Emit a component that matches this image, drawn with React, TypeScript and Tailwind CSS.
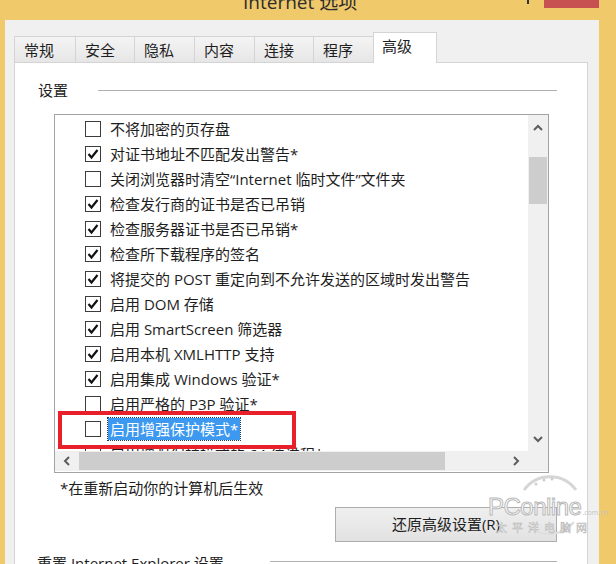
const rows: { label: string; checked: boolean; selected?: boolean }[] = [
  { label: "不将加密的页存盘", checked: false },
  { label: "对证书地址不匹配发出警告*", checked: true },
  { label: "关闭浏览器时清空“Internet 临时文件”文件夹", checked: false },
  { label: "检查发行商的证书是否已吊销", checked: true },
  { label: "检查服务器证书是否已吊销*", checked: true },
  { label: "检查所下载程序的签名", checked: true },
  { label: "将提交的 POST 重定向到不允许发送的区域时发出警告", checked: true },
  { label: "启用 DOM 存储", checked: true },
  { label: "启用 SmartScreen 筛选器", checked: true },
  { label: "启用本机 XMLHTTP 支持", checked: true },
  { label: "启用集成 Windows 验证*", checked: true },
  { label: "启用严格的 P3P 验证*", checked: false },
  { label: "启用增强保护模式*", checked: false, selected: true },
  { label: "启用增强保护模式的 64 位进程*", checked: false },
];

const tabs = [
  { label: "常规", w: "w-[62px]" },
  { label: "安全", w: "w-[60px]" },
  { label: "隐私", w: "w-[61px]" },
  { label: "内容", w: "w-[61px]" },
  { label: "连接", w: "w-[60px]" },
  { label: "程序", w: "w-[61px]" },
];

const Chevron = ({ dir }: { dir: "up" | "down" | "left" | "right" }) => {
  const pts = {
    up: "1,7 5,3 9,7",
    down: "1,3 5,7 9,3",
    left: "7,1 3,5 7,9",
    right: "3,1 7,5 3,9",
  }[dir];
  return (
    <svg width="10" height="10" viewBox="0 0 10 10">
      <polyline points={pts} fill="none" stroke="#5d5d5d" strokeWidth="2" />
    </svg>
  );
};

const Checkbox = ({ checked }: { checked: boolean }) => (
  <div className="w-[16px] h-[16px] border border-[#3c3c3c] bg-white flex items-center justify-center shrink-0">
    {checked && (
      <svg width="12" height="12" viewBox="0 0 12 12">
        <polyline points="1.5,6 4.5,9.5 10.5,2" fill="none" stroke="#111" strokeWidth="2.2" />
      </svg>
    )}
  </div>
);

const App = () => {
  return (
    <div className="relative w-[616px] h-[564px] overflow-hidden bg-[#f0c96b] flex flex-col font-['Open_Sans','Noto_Sans_CJK_SC',sans-serif] text-[15px] text-[#1e1e1e]">
      {/* Title bar */}
      <div className="h-[20px] shrink-0 flex items-start overflow-hidden">
        <div className="ml-[243px] -mt-[9px] text-[19px] leading-[22px] text-[#2d2d2d] whitespace-nowrap">Internet 选项</div>
        <div className="ml-auto w-[2px] h-[4px] bg-[#333]" />
        <div className="ml-[15px] mr-[17px] w-[55px] h-[8px] bg-[#c75050] flex justify-center overflow-hidden">
          <span className="-mt-[11px] text-white text-[14px] leading-[16px]">×</span>
        </div>
      </div>

      {/* Window body */}
      <div className="ml-[5px] w-[594px] flex-1 bg-[#f0f0f0] pl-[9px] pt-[12px] overflow-hidden">
        {/* Tabs */}
        <div className="flex items-end h-[30px]">
          {tabs.map((t) => (
            <div
              key={t.label}
              className={`${t.w} -mr-px h-[26px] border border-b-0 border-[#d4d4d4] bg-gradient-to-b from-[#f4f4f4] to-[#e6e6e6] pl-[9px] leading-[26px] text-[15px]`}
            >
              {t.label}
            </div>
          ))}
          <div className="relative z-10 w-[64px] h-[31px] -mb-px border border-b-0 border-[#d4d4d4] bg-white pl-[8px] pt-[1px] leading-[24px] text-[15px]">
            高级
          </div>
        </div>

        {/* Panel */}
        <div className="w-[574px] h-[510px] bg-white border border-[#d4d4d4]">
          {/* 设置 label */}
          <div className="flex items-center mt-[17px] h-[20px]">
            <span className="ml-[23px] leading-[20px]">设置</span>
            <div className="ml-[30px] w-[459px] h-px bg-[#b0b0b0]" />
          </div>

          {/* List box */}
          <div className="ml-[39px] mt-[14px] w-[495px] h-[359px] border border-[#a3a3a3] grid grid-cols-[1fr_20px] grid-rows-[336px_20px]">
            <div className="relative overflow-hidden pt-px">
              {rows.map((r) => (
                <div key={r.label} className="h-[25px] flex items-center pl-[30px] whitespace-nowrap">
                  <Checkbox checked={r.checked} />
                  {r.selected ? (
                    <span className="ml-[7px] px-[2px] h-[22px] leading-[22px] bg-[#3d98f0] text-white outline-1 outline-dotted outline-[#1d3a5c]">
                      {r.label}
                    </span>
                  ) : (
                    <span className="ml-[9px] leading-[20px]">{r.label}</span>
                  )}
                </div>
              ))}
              {/* annotation */}
              <div className="absolute left-[3px] top-[296px] w-[238px] h-[38px] border-[4px] border-[#e8202a]" />
            </div>

            {/* vertical scrollbar */}
            <div className="bg-[#f0f0f0] flex flex-col">
              <div className="h-[26px] flex items-center justify-center">
                <Chevron dir="up" />
              </div>
              <div className="mt-[16px] h-[47px] bg-[#cdcdcd] mx-px" />
              <div className="flex-1" />
              <div className="h-[24px] flex items-center justify-center">
                <Chevron dir="down" />
              </div>
            </div>

            {/* horizontal scrollbar */}
            <div className="bg-[#f0f0f0] flex items-stretch">
              <div className="w-[24px] flex items-center justify-center">
                <Chevron dir="left" />
              </div>
              <div className="w-[366px] my-px bg-[#cdcdcd]" />
              <div className="flex-1" />
              <div className="w-[25px] flex items-center justify-center">
                <Chevron dir="right" />
              </div>
            </div>
            <div className="bg-[#f0f0f0]" />
          </div>

          <div className="ml-[45px] mt-[5px] leading-[20px]">*在重新启动你的计算机后生效</div>

          <div className="ml-[320px] mt-[9px] w-[222px] h-[35px] border border-[#adadad] bg-gradient-to-b from-[#efefef] to-[#e2e2e2] flex items-center justify-center">
            还原高级设置(R)
          </div>

          {/* 重置 group */}
          <div className="flex items-start mt-[11px]">
            <span className="ml-[22px] w-[233px] shrink-0 leading-[20px] whitespace-nowrap">重置 Internet Explorer 设置</span>
            <div className="mt-[8px] w-[287px] h-px bg-[#b0b0b0]" />
          </div>
        </div>
      </div>

      {/* watermark */}
      <div className="absolute left-[488px] top-[470px] w-[110px] h-[78px] pointer-events-none">
        <svg className="absolute left-[26px] top-0" width="72" height="72" viewBox="0 0 72 72">
          <path d="M10 20 A32 32 0 0 1 62 20" fill="none" stroke="#d6d6d6" strokeWidth="3" />
          <path d="M60 52 A32 32 0 0 1 14 56" fill="none" stroke="#dedede" strokeWidth="2" />
          <circle cx="22" cy="14" r="1.5" fill="#cfcfcf" />
          <circle cx="30" cy="10" r="1.5" fill="#cfcfcf" />
          <circle cx="38" cy="9" r="1.5" fill="#cfcfcf" />
        </svg>
        <div className="absolute left-0 top-[25px] flex items-end whitespace-nowrap">
          <span className="font-['Liberation_Sans',sans-serif] text-[24px] leading-[24px] text-white tracking-[-0.5px] [-webkit-text-stroke:1px_#b9b9b9]">
            PConline
          </span>
          <span className="ml-px mb-[2px] text-[7px] leading-[8px] text-[#c4c4c4]">.com.cn</span>
        </div>
        <div className="absolute left-[8px] top-[51px] whitespace-nowrap text-[11px] leading-[13px] tracking-[5px] text-white [-webkit-text-stroke:0.6px_#bdbdbd]">
          太平洋电脑网
        </div>
      </div>
    </div>
  );
};

export default App;
